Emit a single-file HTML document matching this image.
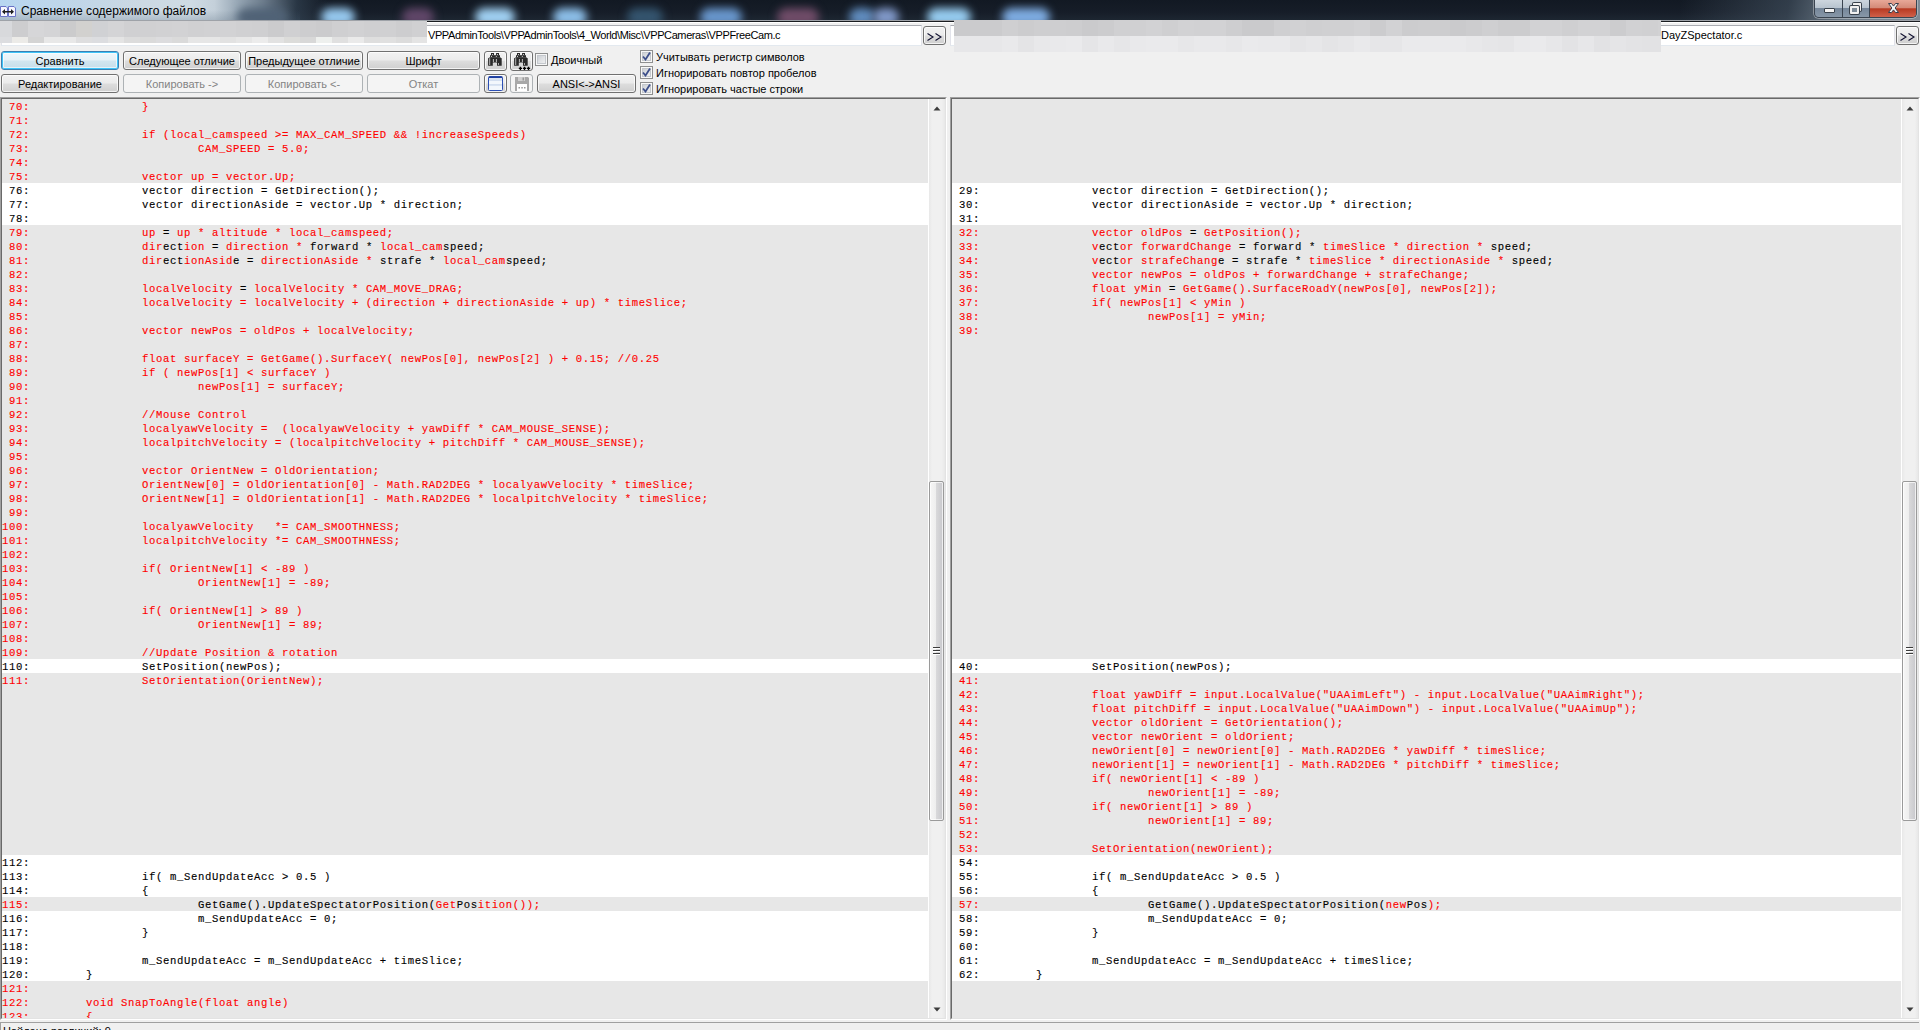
<!DOCTYPE html><html><head><meta charset="utf-8"><style>
*{margin:0;padding:0;box-sizing:border-box}
html,body{width:1920px;height:1030px;overflow:hidden;background:#f0f0f0;position:relative;font-family:"Liberation Sans",sans-serif;font-size:11px;color:#000}
.a{position:absolute}
#tb{left:0;top:0;width:1920px;height:20px;background:linear-gradient(#121923 0%,#161d28 60%,#1d2631 100%);overflow:hidden}
#tb .blob{position:absolute;border-radius:50%;filter:blur(5px)}
#tline1{left:0;top:20px;width:1920px;height:1px;background:#9ea2a8}
#tline2{left:0;top:21px;width:1920px;height:1px;background:#1a1c20}
#ttl{left:21px;top:3px;font-size:12px;line-height:16px;color:#000;white-space:pre}
.tbox{background:#fff;border:1px solid #e2e3ea;border-top-color:#abadb3;border-bottom-color:#e3e9ef;height:21px;top:25px;white-space:pre;overflow:hidden;line-height:19px;padding-left:0}
.btn{border:1px solid #707070;border-radius:3px;text-align:center;white-space:pre;overflow:hidden;
 background:linear-gradient(#f2f2f2 0%,#ebebeb 48%,#dddddd 52%,#cfcfcf 100%);box-shadow:inset 0 0 0 1px rgba(255,255,255,.75);line-height:18px;height:19px}
.btn.def{border-color:#3c7fb1;background:linear-gradient(#f0f7fb 0%,#e6f1f7 48%,#d2e6f0 52%,#c6dde9 100%);box-shadow:inset 0 0 0 1px #3fc4f8,inset 0 0 0 2px rgba(255,255,255,.6)}
.btn.dis{border-color:#adb2b5;background:#f4f4f4;color:#838383;box-shadow:none}
.cb{width:13px;height:13px;border:1px solid #8e8f8f;background:linear-gradient(135deg,#c2c6cc 0%,#dfe1e4 50%,#f6f6f6 100%);box-shadow:inset 0 0 0 1px #f8f8f8,inset 0 0 0 2px #c4c8cd}
.pane{top:97px;height:923px;border-top:1px solid #a0a0a0;border-left:1px solid #a0a0a0;border-right:1px solid #fff;border-bottom:1px solid #fff}
.pin{position:absolute;left:0;top:0;right:0;bottom:0;border-top:1px solid #696969;border-left:1px solid #696969;border-right:1px solid #e3e3e3;border-bottom:1px solid #e3e3e3;overflow:hidden;background:#e7e7e7}
.row{position:absolute;left:0;height:14px;white-space:pre;font-family:"Liberation Mono",monospace;font-size:10.6px;letter-spacing:0.64px;line-height:14px;color:#f00;padding-top:1px;-webkit-text-stroke:0.12px currentColor}
.row.w{background:#fff}
.row.g{background:#e7e7e7}
.K{color:#000}
.R{color:#f00}
.sb{position:absolute;top:0;bottom:0;width:17px;background:linear-gradient(90deg,#e8e8e8,#f0f0f0 20%,#f0f0f0 80%,#e8e8e8);border-left:1px solid #fff}
.thumb{position:absolute;left:0px;width:15px;border:1px solid #9a9a9a;border-radius:2px;background:linear-gradient(90deg,#f6f6f6 0%,#eeeeee 45%,#d8d8da 50%,#c8c8cc 100%);box-shadow:inset 0 0 0 1px rgba(255,255,255,.7)}
.mos{position:absolute}
</style></head><body><div id="tb" class="a"><div class="a" style="left:0;top:0;width:330px;height:20px;background:linear-gradient(90deg,#c3d3e0 0%,#cfdbe4 58%,#c4d0da 65%,#98a8b6 72%,#6c7c8c 80%,rgba(50,66,82,.7) 90%,rgba(19,26,36,0) 100%)"></div><div class="a" style="left:0;top:0;width:140px;height:10px;background:linear-gradient(90deg,rgba(180,215,245,.8),rgba(200,220,235,0))"></div><div class="a" style="left:0;top:10px;width:300px;height:10px;background:linear-gradient(rgba(70,90,110,0),rgba(70,90,110,.22))"></div><div class="a" style="left:237px;top:8px;width:50px;height:18px;border-radius:9px;background:rgb(80,98,118);filter:blur(4px)"></div><div class="a" style="left:321px;top:8px;width:34px;height:18px;border-radius:9px;background:rgb(150,200,238);filter:blur(4px)"></div><div class="a" style="left:402px;top:8px;width:32px;height:18px;border-radius:9px;background:rgb(96,70,104);filter:blur(4px)"></div><div class="a" style="left:475px;top:8px;width:40px;height:18px;border-radius:9px;background:rgb(160,208,242);filter:blur(4px)"></div><div class="a" style="left:553px;top:8px;width:34px;height:18px;border-radius:9px;background:rgb(140,190,232);filter:blur(4px)"></div><div class="a" style="left:627px;top:8px;width:36px;height:18px;border-radius:9px;background:rgb(52,84,110);filter:blur(4px)"></div><div class="a" style="left:700px;top:8px;width:42px;height:18px;border-radius:9px;background:rgb(104,150,204);filter:blur(4px)"></div><div class="a" style="left:777px;top:8px;width:42px;height:18px;border-radius:9px;background:rgb(112,76,104);filter:blur(4px)"></div><div class="a" style="left:849px;top:8px;width:26px;height:18px;border-radius:9px;background:rgb(96,140,190);filter:blur(4px)"></div><div class="a" style="left:873px;top:8px;width:26px;height:18px;border-radius:9px;background:rgb(128,152,200);filter:blur(4px)"></div><div class="a" style="left:927px;top:8px;width:44px;height:18px;border-radius:9px;background:rgb(150,204,240);filter:blur(4px)"></div><div class="a" style="left:1002px;top:8px;width:48px;height:18px;border-radius:9px;background:rgb(126,172,226);filter:blur(4px)"></div><div class="a" style="left:1680px;top:0;width:240px;height:20px;background:linear-gradient(100deg,rgba(19,26,36,0) 0%,rgba(70,85,100,.6) 45%,#6d7b88 70%,#7e8b96 100%)"></div></div><div id="tline1" class="a"></div><div id="tline2" class="a"></div><div class="a" style="left:0;top:22px;width:1920px;height:1px;background:#fff"></div><svg class="a" style="left:0;top:6px" width="17" height="12" viewBox="0 0 17 12"><path d="M0.5 0.5H6L7.5 2V10.5H0.5Z" fill="#f6f6ff" stroke="#6a74c6"/><path d="M8.5 0.5H14L15.5 2V10.5H8.5Z" fill="#f6f6ff" stroke="#6a74c6"/><path d="M2 5.8L5 3V5H11V3L14 5.8L11 8.6V6.6H5V8.6Z" fill="#1e1e1e"/></svg><div id="ttl" class="a">Сравнение содержимого файлов</div><div class="a" style="left:1814px;top:0;width:103px;height:18px;border:1px solid #3a4450;border-top:none;border-radius:0 0 5px 5px;overflow:hidden;box-shadow:0 0 0 1px rgba(255,255,255,.35)"><div class="a" style="left:0;top:0;width:28px;height:17px;background:linear-gradient(#cdd6de 0%,#b8c4cf 45%,#76879a 50%,#8797a8 100%);border-right:1px solid #3a4450"></div><div class="a" style="left:28px;top:0;width:27px;height:17px;background:linear-gradient(#cdd6de 0%,#b8c4cf 45%,#76879a 50%,#8797a8 100%);border-right:1px solid #3a4450"></div><div class="a" style="left:55px;top:0;width:48px;height:17px;background:linear-gradient(#e8a898 0%,#d48a78 45%,#b83a22 52%,#d0604a 100%)"></div><div class="a" style="left:9px;top:8px;width:11px;height:5px;background:#f4f4f4;border:1px solid #39424c;border-radius:1px"></div><div class="a" style="left:38px;top:3px;width:8px;height:8px;border:2px solid #f0f0f0;box-shadow:0 0 0 1px #39424c;border-radius:1px"></div><div class="a" style="left:35px;top:5.5px;width:9px;height:8px;border:2px solid #f0f0f0;box-shadow:0 0 0 1px #39424c;background:#7d8b98;border-radius:1px"></div><svg class="a" style="left:72px;top:2px" width="13" height="12" viewBox="0 0 13 12"><path d="M1.5 1.5h3l2 2.6 2-2.6h3l-3.4 4.5 3.4 4.5h-3l-2-2.6-2 2.6h-3l3.4-4.5z" fill="#f6f6f6" stroke="#3a3e4c" stroke-width="1"/></svg></div><div class="a tbox" style="left:1px;width:921px;padding-left:426px;letter-spacing:-0.4px">VPPAdminTools\VPPAdminTools\4_World\Misc\VPPCameras\VPPFreeCam.c</div><div class="a btn" style="left:923px;top:26px;width:23px;height:19px"><svg class="a" style="left:3px;top:5.5px" width="16" height="8" viewBox="0 0 16 8"><path d="M0.5 0.5L6 4L0.5 7.5M8.5 0.5L14 4L8.5 7.5" fill="none" stroke="#101030" stroke-width="1.1"/></svg></div><div class="a tbox" style="left:950px;width:945px;padding-left:710px">DayZSpectator.c</div><div class="a btn" style="left:1896px;top:26px;width:23px;height:19px"><svg class="a" style="left:3px;top:5.5px" width="16" height="8" viewBox="0 0 16 8"><path d="M0.5 0.5L6 4L0.5 7.5M8.5 0.5L14 4L8.5 7.5" fill="none" stroke="#101030" stroke-width="1.1"/></svg></div><div class="mos" style="left:0px;top:21px;width:12px;height:16px;background:#d8d9dc"></div><div class="mos" style="left:12px;top:21px;width:16px;height:16px;background:#cdcdcf"></div><div class="mos" style="left:28px;top:21px;width:16px;height:16px;background:#d6d6d8"></div><div class="mos" style="left:44px;top:21px;width:16px;height:16px;background:#d4d4d6"></div><div class="mos" style="left:60px;top:21px;width:16px;height:16px;background:#cbcbcc"></div><div class="mos" style="left:76px;top:21px;width:16px;height:16px;background:#d2d1cf"></div><div class="mos" style="left:92px;top:21px;width:16px;height:16px;background:#d0d1d4"></div><div class="mos" style="left:108px;top:21px;width:16px;height:16px;background:#d4d4d6"></div><div class="mos" style="left:124px;top:21px;width:16px;height:16px;background:#d0d0d2"></div><div class="mos" style="left:140px;top:21px;width:16px;height:16px;background:#d0d0d2"></div><div class="mos" style="left:156px;top:21px;width:16px;height:16px;background:#d1d1d3"></div><div class="mos" style="left:172px;top:21px;width:16px;height:16px;background:#d2d2d4"></div><div class="mos" style="left:188px;top:21px;width:16px;height:16px;background:#d0d0d2"></div><div class="mos" style="left:204px;top:21px;width:16px;height:16px;background:#d1d1d3"></div><div class="mos" style="left:220px;top:21px;width:16px;height:16px;background:#d2d2d4"></div><div class="mos" style="left:236px;top:21px;width:16px;height:16px;background:#d0d0d2"></div><div class="mos" style="left:252px;top:21px;width:16px;height:16px;background:#cfcfd1"></div><div class="mos" style="left:268px;top:21px;width:16px;height:16px;background:#cbcbcd"></div><div class="mos" style="left:284px;top:21px;width:16px;height:16px;background:#d0d0d2"></div><div class="mos" style="left:300px;top:21px;width:16px;height:16px;background:#cdcdcf"></div><div class="mos" style="left:316px;top:21px;width:16px;height:16px;background:#cbcbcd"></div><div class="mos" style="left:332px;top:21px;width:16px;height:16px;background:#cfcfd1"></div><div class="mos" style="left:348px;top:21px;width:16px;height:16px;background:#d1d1d3"></div><div class="mos" style="left:364px;top:21px;width:16px;height:16px;background:#cfcfd1"></div><div class="mos" style="left:380px;top:21px;width:16px;height:16px;background:#d0d0d2"></div><div class="mos" style="left:396px;top:21px;width:16px;height:16px;background:#cdcdcf"></div><div class="mos" style="left:412px;top:21px;width:15px;height:16px;background:#d0d0d2"></div><div class="mos" style="left:0px;top:37px;width:12px;height:6px;background:#dcdde0"></div><div class="mos" style="left:12px;top:37px;width:16px;height:6px;background:#ecebe8"></div><div class="mos" style="left:28px;top:37px;width:16px;height:6px;background:#d4d4d4"></div><div class="mos" style="left:44px;top:37px;width:16px;height:6px;background:#e8e8e8"></div><div class="mos" style="left:60px;top:37px;width:16px;height:6px;background:#e8e8e8"></div><div class="mos" style="left:76px;top:37px;width:16px;height:6px;background:#dededf"></div><div class="mos" style="left:92px;top:37px;width:16px;height:6px;background:#dcdde0"></div><div class="mos" style="left:108px;top:37px;width:16px;height:6px;background:#e4e4e4"></div><div class="mos" style="left:124px;top:37px;width:16px;height:6px;background:#dcdcdc"></div><div class="mos" style="left:140px;top:37px;width:16px;height:6px;background:#dadada"></div><div class="mos" style="left:156px;top:37px;width:16px;height:6px;background:#dcdcde"></div><div class="mos" style="left:172px;top:37px;width:16px;height:6px;background:#dadada"></div><div class="mos" style="left:188px;top:37px;width:16px;height:6px;background:#e6e6e6"></div><div class="mos" style="left:204px;top:37px;width:16px;height:6px;background:#e6e6e6"></div><div class="mos" style="left:220px;top:37px;width:16px;height:6px;background:#e2e2e2"></div><div class="mos" style="left:236px;top:37px;width:16px;height:6px;background:#e6e6e6"></div><div class="mos" style="left:252px;top:37px;width:16px;height:6px;background:#ececec"></div><div class="mos" style="left:268px;top:37px;width:16px;height:6px;background:#e2e2e2"></div><div class="mos" style="left:284px;top:37px;width:16px;height:6px;background:#dcdcda"></div><div class="mos" style="left:300px;top:37px;width:16px;height:6px;background:#d8d8d8"></div><div class="mos" style="left:316px;top:37px;width:16px;height:6px;background:#eef0ee"></div><div class="mos" style="left:332px;top:37px;width:16px;height:6px;background:#e0e0e0"></div><div class="mos" style="left:348px;top:37px;width:16px;height:6px;background:#eaeaea"></div><div class="mos" style="left:364px;top:37px;width:16px;height:6px;background:#dedede"></div><div class="mos" style="left:380px;top:37px;width:16px;height:6px;background:#e0e0e0"></div><div class="mos" style="left:396px;top:37px;width:16px;height:6px;background:#dcdcdc"></div><div class="mos" style="left:412px;top:37px;width:15px;height:6px;background:#e4e4e4"></div><div class="mos" style="left:954px;top:20px;width:16px;height:16px;background:rgb(202,202,204)"></div><div class="mos" style="left:970px;top:20px;width:16px;height:16px;background:rgb(203,203,205)"></div><div class="mos" style="left:986px;top:20px;width:16px;height:16px;background:rgb(203,203,205)"></div><div class="mos" style="left:1002px;top:20px;width:16px;height:16px;background:rgb(207,207,209)"></div><div class="mos" style="left:1018px;top:20px;width:16px;height:16px;background:rgb(204,204,206)"></div><div class="mos" style="left:1034px;top:20px;width:16px;height:16px;background:rgb(206,206,208)"></div><div class="mos" style="left:1050px;top:20px;width:16px;height:16px;background:rgb(206,206,208)"></div><div class="mos" style="left:1066px;top:20px;width:16px;height:16px;background:rgb(205,205,207)"></div><div class="mos" style="left:1082px;top:20px;width:16px;height:16px;background:rgb(202,202,204)"></div><div class="mos" style="left:1098px;top:20px;width:16px;height:16px;background:rgb(204,204,206)"></div><div class="mos" style="left:1114px;top:20px;width:16px;height:16px;background:rgb(208,208,210)"></div><div class="mos" style="left:1130px;top:20px;width:16px;height:16px;background:rgb(208,208,210)"></div><div class="mos" style="left:1146px;top:20px;width:16px;height:16px;background:rgb(210,210,212)"></div><div class="mos" style="left:1162px;top:20px;width:16px;height:16px;background:rgb(207,207,209)"></div><div class="mos" style="left:1178px;top:20px;width:16px;height:16px;background:rgb(210,210,212)"></div><div class="mos" style="left:1194px;top:20px;width:16px;height:16px;background:rgb(209,209,211)"></div><div class="mos" style="left:1210px;top:20px;width:16px;height:16px;background:rgb(210,210,212)"></div><div class="mos" style="left:1226px;top:20px;width:16px;height:16px;background:rgb(206,206,208)"></div><div class="mos" style="left:1242px;top:20px;width:16px;height:16px;background:rgb(202,202,204)"></div><div class="mos" style="left:1258px;top:20px;width:16px;height:16px;background:rgb(202,202,204)"></div><div class="mos" style="left:1274px;top:20px;width:16px;height:16px;background:rgb(207,207,209)"></div><div class="mos" style="left:1290px;top:20px;width:16px;height:16px;background:rgb(209,209,211)"></div><div class="mos" style="left:1306px;top:20px;width:16px;height:16px;background:rgb(207,207,209)"></div><div class="mos" style="left:1322px;top:20px;width:16px;height:16px;background:rgb(208,208,210)"></div><div class="mos" style="left:1338px;top:20px;width:16px;height:16px;background:rgb(208,208,210)"></div><div class="mos" style="left:1354px;top:20px;width:16px;height:16px;background:rgb(210,210,212)"></div><div class="mos" style="left:1370px;top:20px;width:16px;height:16px;background:rgb(204,204,206)"></div><div class="mos" style="left:1386px;top:20px;width:16px;height:16px;background:rgb(210,210,212)"></div><div class="mos" style="left:1402px;top:20px;width:16px;height:16px;background:rgb(204,204,206)"></div><div class="mos" style="left:1418px;top:20px;width:16px;height:16px;background:rgb(205,205,207)"></div><div class="mos" style="left:1434px;top:20px;width:16px;height:16px;background:rgb(205,205,207)"></div><div class="mos" style="left:1450px;top:20px;width:16px;height:16px;background:rgb(202,202,204)"></div><div class="mos" style="left:1466px;top:20px;width:16px;height:16px;background:rgb(204,204,206)"></div><div class="mos" style="left:1482px;top:20px;width:16px;height:16px;background:rgb(207,207,209)"></div><div class="mos" style="left:1498px;top:20px;width:16px;height:16px;background:rgb(204,204,206)"></div><div class="mos" style="left:1514px;top:20px;width:16px;height:16px;background:rgb(204,204,206)"></div><div class="mos" style="left:1530px;top:20px;width:16px;height:16px;background:rgb(210,210,212)"></div><div class="mos" style="left:1546px;top:20px;width:16px;height:16px;background:rgb(210,210,212)"></div><div class="mos" style="left:1562px;top:20px;width:16px;height:16px;background:rgb(207,207,209)"></div><div class="mos" style="left:1578px;top:20px;width:16px;height:16px;background:rgb(210,210,212)"></div><div class="mos" style="left:1594px;top:20px;width:16px;height:16px;background:rgb(210,210,212)"></div><div class="mos" style="left:1610px;top:20px;width:16px;height:16px;background:rgb(204,204,206)"></div><div class="mos" style="left:1626px;top:20px;width:16px;height:16px;background:rgb(209,209,211)"></div><div class="mos" style="left:1642px;top:20px;width:16px;height:16px;background:rgb(208,208,210)"></div><div class="mos" style="left:1658px;top:20px;width:3px;height:16px;background:rgb(210,210,212)"></div><div class="mos" style="left:954px;top:36px;width:16px;height:16px;background:rgb(231,231,233)"></div><div class="mos" style="left:970px;top:36px;width:16px;height:16px;background:rgb(231,231,233)"></div><div class="mos" style="left:986px;top:36px;width:16px;height:16px;background:rgb(231,231,233)"></div><div class="mos" style="left:1002px;top:36px;width:16px;height:16px;background:rgb(233,233,235)"></div><div class="mos" style="left:1018px;top:36px;width:16px;height:16px;background:rgb(228,228,230)"></div><div class="mos" style="left:1034px;top:36px;width:16px;height:16px;background:rgb(232,232,234)"></div><div class="mos" style="left:1050px;top:36px;width:16px;height:16px;background:rgb(233,233,235)"></div><div class="mos" style="left:1066px;top:36px;width:16px;height:16px;background:rgb(234,234,236)"></div><div class="mos" style="left:1082px;top:36px;width:16px;height:16px;background:rgb(229,229,231)"></div><div class="mos" style="left:1098px;top:36px;width:16px;height:16px;background:rgb(233,233,235)"></div><div class="mos" style="left:1114px;top:36px;width:16px;height:16px;background:rgb(230,230,232)"></div><div class="mos" style="left:1130px;top:36px;width:16px;height:16px;background:rgb(233,233,235)"></div><div class="mos" style="left:1146px;top:36px;width:16px;height:16px;background:rgb(234,234,236)"></div><div class="mos" style="left:1162px;top:36px;width:16px;height:16px;background:rgb(234,234,236)"></div><div class="mos" style="left:1178px;top:36px;width:16px;height:16px;background:rgb(231,231,233)"></div><div class="mos" style="left:1194px;top:36px;width:16px;height:16px;background:rgb(233,233,235)"></div><div class="mos" style="left:1210px;top:36px;width:16px;height:16px;background:rgb(233,233,235)"></div><div class="mos" style="left:1226px;top:36px;width:16px;height:16px;background:rgb(231,231,233)"></div><div class="mos" style="left:1242px;top:36px;width:16px;height:16px;background:rgb(234,234,236)"></div><div class="mos" style="left:1258px;top:36px;width:16px;height:16px;background:rgb(233,233,235)"></div><div class="mos" style="left:1274px;top:36px;width:16px;height:16px;background:rgb(233,233,235)"></div><div class="mos" style="left:1290px;top:36px;width:16px;height:16px;background:rgb(229,229,231)"></div><div class="mos" style="left:1306px;top:36px;width:16px;height:16px;background:rgb(231,231,233)"></div><div class="mos" style="left:1322px;top:36px;width:16px;height:16px;background:rgb(228,228,230)"></div><div class="mos" style="left:1338px;top:36px;width:16px;height:16px;background:rgb(230,230,232)"></div><div class="mos" style="left:1354px;top:36px;width:16px;height:16px;background:rgb(233,233,235)"></div><div class="mos" style="left:1370px;top:36px;width:16px;height:16px;background:rgb(230,230,232)"></div><div class="mos" style="left:1386px;top:36px;width:16px;height:16px;background:rgb(230,230,232)"></div><div class="mos" style="left:1402px;top:36px;width:16px;height:16px;background:rgb(234,234,236)"></div><div class="mos" style="left:1418px;top:36px;width:16px;height:16px;background:rgb(234,234,236)"></div><div class="mos" style="left:1434px;top:36px;width:16px;height:16px;background:rgb(234,234,236)"></div><div class="mos" style="left:1450px;top:36px;width:16px;height:16px;background:rgb(234,234,236)"></div><div class="mos" style="left:1466px;top:36px;width:16px;height:16px;background:rgb(232,232,234)"></div><div class="mos" style="left:1482px;top:36px;width:16px;height:16px;background:rgb(230,230,232)"></div><div class="mos" style="left:1498px;top:36px;width:16px;height:16px;background:rgb(229,229,231)"></div><div class="mos" style="left:1514px;top:36px;width:16px;height:16px;background:rgb(233,233,235)"></div><div class="mos" style="left:1530px;top:36px;width:16px;height:16px;background:rgb(234,234,236)"></div><div class="mos" style="left:1546px;top:36px;width:16px;height:16px;background:rgb(231,231,233)"></div><div class="mos" style="left:1562px;top:36px;width:16px;height:16px;background:rgb(227,227,229)"></div><div class="mos" style="left:1578px;top:36px;width:16px;height:16px;background:rgb(231,231,233)"></div><div class="mos" style="left:1594px;top:36px;width:16px;height:16px;background:rgb(226,226,228)"></div><div class="mos" style="left:1610px;top:36px;width:16px;height:16px;background:rgb(229,229,231)"></div><div class="mos" style="left:1626px;top:36px;width:16px;height:16px;background:rgb(227,227,229)"></div><div class="mos" style="left:1642px;top:36px;width:16px;height:16px;background:rgb(226,226,228)"></div><div class="mos" style="left:1658px;top:36px;width:3px;height:16px;background:rgb(226,226,228)"></div><div class="a btn def" style="left:1px;top:51px;width:118px">Сравнить</div><div class="a btn " style="left:123px;top:51px;width:118px">Следующее отличие</div><div class="a btn " style="left:245px;top:51px;width:118px">Предыдущее отличие</div><div class="a btn " style="left:367px;top:51px;width:113px">Шрифт</div><div class="a btn " style="left:1px;top:74px;width:118px">Редактирование</div><div class="a btn dis" style="left:123px;top:74px;width:118px">Копировать -&gt;</div><div class="a btn dis" style="left:245px;top:74px;width:118px">Копировать &lt;-</div><div class="a btn dis" style="left:367px;top:74px;width:113px">Откат</div><div class="a btn" style="left:484px;top:51px;width:23px;height:20px"><svg class="a" style="left:0;top:-1px" width="20" height="18" viewBox="0 0 20 18"><rect x="6" y="2" width="3" height="2.3" fill="#2a2a2a"/><rect x="11.1" y="2" width="2.9" height="2.3" fill="#2a2a2a"/><rect x="5" y="4.2" width="10" height="2.2" fill="#2a2a2a"/><path d="M3.1 7.2L5 6.2H15L16.7 7.2V14.8H12V11.5H7.8V14.8H3.1Z" fill="#2a2a2a"/><rect x="4.2" y="7.2" width="1" height="6.8" fill="#b8b8b8"/><rect x="7.9" y="8" width="0.9" height="3" fill="#d0d0d0"/><rect x="10.9" y="8" width="0.9" height="3" fill="#d0d0d0"/><rect x="13" y="12" width="1" height="2" fill="#a8a8a8"/><rect x="7" y="3" width="1" height="1" fill="#c8c8c8"/><rect x="12" y="3" width="1" height="1" fill="#c8c8c8"/><rect x="6" y="5" width="1" height="1" fill="#c8c8c8"/><rect x="10.8" y="5" width="1" height="1" fill="#c8c8c8"/></svg></div><div class="a btn" style="left:510px;top:51px;width:23px;height:20px"><svg class="a" style="left:0;top:-1px" width="20" height="18" viewBox="0 0 20 18"><rect x="6" y="2" width="3" height="2.3" fill="#2a2a2a"/><rect x="11.1" y="2" width="2.9" height="2.3" fill="#2a2a2a"/><rect x="5" y="4.2" width="10" height="2.2" fill="#2a2a2a"/><path d="M3.1 7.2L5 6.2H15L16.7 7.2V14.8H12V11.5H7.8V14.8H3.1Z" fill="#2a2a2a"/><rect x="4.2" y="7.2" width="1" height="6.8" fill="#b8b8b8"/><rect x="7.9" y="8" width="0.9" height="3" fill="#d0d0d0"/><rect x="10.9" y="8" width="0.9" height="3" fill="#d0d0d0"/><rect x="13" y="12" width="1" height="2" fill="#a8a8a8"/><rect x="7" y="3" width="1" height="1" fill="#c8c8c8"/><rect x="12" y="3" width="1" height="1" fill="#c8c8c8"/><rect x="6" y="5" width="1" height="1" fill="#c8c8c8"/><rect x="10.8" y="5" width="1" height="1" fill="#c8c8c8"/></svg><svg class="a" style="left:0;top:-1px" width="22" height="20" viewBox="0 0 22 20"><path d="M8.7 15.8h1.4v0.9h0.9v1.4h-0.9v0.9h-1.4v-0.9h-0.9v-1.4h0.9zM12.8 15.8h1.4v0.9h0.9v1.4h-0.9v0.9h-1.4v-0.9h-0.9v-1.4h0.9zM16.8 15.8h1.4v0.9h0.9v1.4h-0.9v0.9h-1.4v-0.9h-0.9v-1.4h0.9z" fill="#000"/></svg></div><div class="a btn" style="left:484px;top:74px;width:23px;height:19px"><svg class="a" style="left:3px;top:1px" width="16" height="16" viewBox="0 0 16 16"><rect x="0.5" y="0.5" width="14" height="14" rx="1" fill="#f2f7fc" stroke="#2c4fb4" stroke-width="1"/><rect x="1" y="0.5" width="13" height="1.6" fill="#1f3f9c"/><rect x="1" y="3.6" width="13" height="0.9" fill="#b4c8e4"/><rect x="1" y="8.5" width="13" height="0.9" fill="#b4c8e4"/></svg></div><div class="a btn dis" style="left:510px;top:74px;width:23px;height:19px"><svg class="a" style="left:3px;top:1px" width="16" height="16" viewBox="0 0 16 16"><path d="M2 1h12l1 1v13H1V1z" fill="#a8a8a8"/><rect x="4" y="1" width="7" height="4" fill="#d0d0d0"/><rect x="8.5" y="1.5" width="1.5" height="3" fill="#999"/><rect x="3" y="8" width="10" height="7" fill="#fff"/><rect x="4.5" y="11" width="1.5" height="1.5" fill="#999"/><rect x="7.3" y="11" width="1.5" height="1.5" fill="#999"/><rect x="10" y="11" width="1.5" height="1.5" fill="#999"/></svg></div><div class="a btn " style="left:537px;top:74px;width:99px">ANSI&lt;-&gt;ANSI</div><div class="a cb" style="left:535px;top:53px"></div><div class="a" style="left:551px;top:54px;line-height:13px;white-space:pre">Двоичный</div><div class="a cb" style="left:640px;top:50px"><svg class="a" style="left:1px;top:1px" width="9" height="9" viewBox="0 0 9 9"><path d="M1 4.5 L3.5 7.5 L8 0.5" fill="none" stroke="#3d4f8a" stroke-width="1.8"/></svg></div><div class="a" style="left:656px;top:51px;line-height:13px;white-space:pre">Учитывать регистр символов</div><div class="a cb" style="left:640px;top:66px"><svg class="a" style="left:1px;top:1px" width="9" height="9" viewBox="0 0 9 9"><path d="M1 4.5 L3.5 7.5 L8 0.5" fill="none" stroke="#3d4f8a" stroke-width="1.8"/></svg></div><div class="a" style="left:656px;top:67px;line-height:13px;white-space:pre">Игнорировать повтор пробелов</div><div class="a cb" style="left:640px;top:82px"><svg class="a" style="left:1px;top:1px" width="9" height="9" viewBox="0 0 9 9"><path d="M1 4.5 L3.5 7.5 L8 0.5" fill="none" stroke="#3d4f8a" stroke-width="1.8"/></svg></div><div class="a" style="left:656px;top:83px;line-height:13px;white-space:pre">Игнорировать частые строки</div><div class="a pane" style="left:0px;width:947px"><div class="pin"><div class="row g" style="top:0px;width:100%"><span> 70:</span><span class="R">                }</span></div><div class="row g" style="top:14px;width:100%"><span> 71:</span></div><div class="row g" style="top:28px;width:100%"><span> 72:</span><span class="R">                if (local_camspeed &gt;= MAX_CAM_SPEED &amp;&amp; !increaseSpeeds)</span></div><div class="row g" style="top:42px;width:100%"><span> 73:</span><span class="R">                        CAM_SPEED = 5.0;</span></div><div class="row g" style="top:56px;width:100%"><span> 74:</span></div><div class="row g" style="top:70px;width:100%"><span> 75:</span><span class="R">                vector up = vector.Up;</span></div><div class="row w K" style="top:84px;width:100%"><span> 76:</span><span class="K">                vector direction = GetDirection();</span></div><div class="row w K" style="top:98px;width:100%"><span> 77:</span><span class="K">                vector directionAside = vector.Up * direction;</span></div><div class="row w K" style="top:112px;width:100%"><span> 78:</span></div><div class="row g" style="top:126px;width:100%"><span> 79:</span><span class="R">                up </span><span class="K">=</span><span class="R"> up * altitude * local_camspeed;</span></div><div class="row g" style="top:140px;width:100%"><span> 80:</span><span class="R">                dir</span><span class="K">ect</span><span class="R">ion</span><span class="K"> = </span><span class="R">direction * </span><span class="K">forward * </span><span class="R">local_cam</span><span class="K">speed;</span></div><div class="row g" style="top:154px;width:100%"><span> 81:</span><span class="R">                dir</span><span class="K">ect</span><span class="R">ionAsid</span><span class="K">e = </span><span class="R">directionAside * </span><span class="K">strafe * </span><span class="R">local_cam</span><span class="K">speed;</span></div><div class="row g" style="top:168px;width:100%"><span> 82:</span></div><div class="row g" style="top:182px;width:100%"><span> 83:</span><span class="R">                localVelocity </span><span class="K">=</span><span class="R"> localVelocity * CAM_MOVE_DRAG;</span></div><div class="row g" style="top:196px;width:100%"><span> 84:</span><span class="R">                localVelocity = localVelocity + (direction + directionAside + up) * timeSlice;</span></div><div class="row g" style="top:210px;width:100%"><span> 85:</span></div><div class="row g" style="top:224px;width:100%"><span> 86:</span><span class="R">                vector newPos = oldPos + localVelocity;</span></div><div class="row g" style="top:238px;width:100%"><span> 87:</span></div><div class="row g" style="top:252px;width:100%"><span> 88:</span><span class="R">                float surfaceY = GetGame().SurfaceY( newPos[0], newPos[2] ) + 0.15; //0.25</span></div><div class="row g" style="top:266px;width:100%"><span> 89:</span><span class="R">                if ( newPos[1] &lt; surfaceY )</span></div><div class="row g" style="top:280px;width:100%"><span> 90:</span><span class="R">                        newPos[1] = surfaceY;</span></div><div class="row g" style="top:294px;width:100%"><span> 91:</span></div><div class="row g" style="top:308px;width:100%"><span> 92:</span><span class="R">                //Mouse Control</span></div><div class="row g" style="top:322px;width:100%"><span> 93:</span><span class="R">                localyawVelocity =  (localyawVelocity + yawDiff * CAM_MOUSE_SENSE);</span></div><div class="row g" style="top:336px;width:100%"><span> 94:</span><span class="R">                localpitchVelocity = (localpitchVelocity + pitchDiff * CAM_MOUSE_SENSE);</span></div><div class="row g" style="top:350px;width:100%"><span> 95:</span></div><div class="row g" style="top:364px;width:100%"><span> 96:</span><span class="R">                vector OrientNew = OldOrientation;</span></div><div class="row g" style="top:378px;width:100%"><span> 97:</span><span class="R">                OrientNew[0] = OldOrientation[0] - Math.RAD2DEG * localyawVelocity * timeSlice;</span></div><div class="row g" style="top:392px;width:100%"><span> 98:</span><span class="R">                OrientNew[1] = OldOrientation[1] - Math.RAD2DEG * localpitchVelocity * timeSlice;</span></div><div class="row g" style="top:406px;width:100%"><span> 99:</span></div><div class="row g" style="top:420px;width:100%"><span>100:</span><span class="R">                localyawVelocity   *= CAM_SMOOTHNESS;</span></div><div class="row g" style="top:434px;width:100%"><span>101:</span><span class="R">                localpitchVelocity *= CAM_SMOOTHNESS;</span></div><div class="row g" style="top:448px;width:100%"><span>102:</span></div><div class="row g" style="top:462px;width:100%"><span>103:</span><span class="R">                if( OrientNew[1] &lt; -89 )</span></div><div class="row g" style="top:476px;width:100%"><span>104:</span><span class="R">                        OrientNew[1] = -89;</span></div><div class="row g" style="top:490px;width:100%"><span>105:</span></div><div class="row g" style="top:504px;width:100%"><span>106:</span><span class="R">                if( OrientNew[1] &gt; 89 )</span></div><div class="row g" style="top:518px;width:100%"><span>107:</span><span class="R">                        OrientNew[1] = 89;</span></div><div class="row g" style="top:532px;width:100%"><span>108:</span></div><div class="row g" style="top:546px;width:100%"><span>109:</span><span class="R">                //Update Position &amp; rotation</span></div><div class="row w K" style="top:560px;width:100%"><span>110:</span><span class="K">                SetPosition(newPos);</span></div><div class="row g" style="top:574px;width:100%"><span>111:</span><span class="R">                SetOrientation(OrientNew);</span></div><div class="row g" style="top:588px;width:100%"></div><div class="row g" style="top:602px;width:100%"></div><div class="row g" style="top:616px;width:100%"></div><div class="row g" style="top:630px;width:100%"></div><div class="row g" style="top:644px;width:100%"></div><div class="row g" style="top:658px;width:100%"></div><div class="row g" style="top:672px;width:100%"></div><div class="row g" style="top:686px;width:100%"></div><div class="row g" style="top:700px;width:100%"></div><div class="row g" style="top:714px;width:100%"></div><div class="row g" style="top:728px;width:100%"></div><div class="row g" style="top:742px;width:100%"></div><div class="row w K" style="top:756px;width:100%"><span>112:</span></div><div class="row w K" style="top:770px;width:100%"><span>113:</span><span class="K">                if( m_SendUpdateAcc &gt; 0.5 )</span></div><div class="row w K" style="top:784px;width:100%"><span>114:</span><span class="K">                {</span></div><div class="row g" style="top:798px;width:100%"><span>115:</span><span class="R">                        </span><span class="K">GetGame().UpdateSpectatorPosition(</span><span class="R">Get</span><span class="K">Pos</span><span class="R">ition());</span></div><div class="row w K" style="top:812px;width:100%"><span>116:</span><span class="K">                        m_SendUpdateAcc = 0;</span></div><div class="row w K" style="top:826px;width:100%"><span>117:</span><span class="K">                }</span></div><div class="row w K" style="top:840px;width:100%"><span>118:</span></div><div class="row w K" style="top:854px;width:100%"><span>119:</span><span class="K">                m_SendUpdateAcc = m_SendUpdateAcc + timeSlice;</span></div><div class="row w K" style="top:868px;width:100%"><span>120:</span><span class="K">        }</span></div><div class="row g" style="top:882px;width:100%"><span>121:</span></div><div class="row g" style="top:896px;width:100%"><span>122:</span><span class="R">        void SnapToAngle(float angle)</span></div><div class="row g" style="top:910px;width:100%"><span>123:</span><span class="R">        {</span></div><div class="sb" style="right:0"><svg class="a" style="left:4px;top:7px" width="8" height="5" viewBox="0 0 8 5"><path d="M0.5 4.5 L4 0.5 L7.5 4.5z" fill="#3c3c3c"/></svg><div class="thumb" style="top:382px;height:340px"><div class="a" style="left:3px;top:165px;width:7px;height:1px;background:#3c3c3c;box-shadow:0 3px 0 #3c3c3c,0 6px 0 #3c3c3c,0 1px 0 #fff,0 4px 0 #fff,0 7px 0 #fff"></div></div><svg class="a" style="left:4px;bottom:6px" width="8" height="5" viewBox="0 0 8 5"><path d="M0.5 0.5 L4 4.5 L7.5 0.5z" fill="#3c3c3c"/></svg></div></div></div><div class="a pane" style="left:950px;width:970px"><div class="pin"><div class="row g" style="top:0px;width:100%"></div><div class="row g" style="top:14px;width:100%"></div><div class="row g" style="top:28px;width:100%"></div><div class="row g" style="top:42px;width:100%"></div><div class="row g" style="top:56px;width:100%"></div><div class="row g" style="top:70px;width:100%"></div><div class="row w K" style="top:84px;width:100%"><span> 29:</span><span class="K">                vector direction = GetDirection();</span></div><div class="row w K" style="top:98px;width:100%"><span> 30:</span><span class="K">                vector directionAside = vector.Up * direction;</span></div><div class="row w K" style="top:112px;width:100%"><span> 31:</span></div><div class="row g" style="top:126px;width:100%"><span> 32:</span><span class="R">                vector oldPos </span><span class="K">=</span><span class="R"> GetPosition();</span></div><div class="row g" style="top:140px;width:100%"><span> 33:</span><span class="R">                v</span><span class="K">ect</span><span class="R">or forwardChange </span><span class="K">= forward * </span><span class="R">timeSlice * direction * </span><span class="K">speed;</span></div><div class="row g" style="top:154px;width:100%"><span> 34:</span><span class="R">                v</span><span class="K">ect</span><span class="R">or strafeChang</span><span class="K">e = strafe * </span><span class="R">timeSlice * directionAside * </span><span class="K">speed;</span></div><div class="row g" style="top:168px;width:100%"><span> 35:</span><span class="R">                vector newPos = oldPos + forwardChange + strafeChange;</span></div><div class="row g" style="top:182px;width:100%"><span> 36:</span><span class="R">                float yMin </span><span class="K">=</span><span class="R"> GetGame().SurfaceRoadY(newPos[0], newPos[2]);</span></div><div class="row g" style="top:196px;width:100%"><span> 37:</span><span class="R">                if( newPos[1] &lt; yMin )</span></div><div class="row g" style="top:210px;width:100%"><span> 38:</span><span class="R">                        newPos[1] = yMin;</span></div><div class="row g" style="top:224px;width:100%"><span> 39:</span></div><div class="row g" style="top:238px;width:100%"></div><div class="row g" style="top:252px;width:100%"></div><div class="row g" style="top:266px;width:100%"></div><div class="row g" style="top:280px;width:100%"></div><div class="row g" style="top:294px;width:100%"></div><div class="row g" style="top:308px;width:100%"></div><div class="row g" style="top:322px;width:100%"></div><div class="row g" style="top:336px;width:100%"></div><div class="row g" style="top:350px;width:100%"></div><div class="row g" style="top:364px;width:100%"></div><div class="row g" style="top:378px;width:100%"></div><div class="row g" style="top:392px;width:100%"></div><div class="row g" style="top:406px;width:100%"></div><div class="row g" style="top:420px;width:100%"></div><div class="row g" style="top:434px;width:100%"></div><div class="row g" style="top:448px;width:100%"></div><div class="row g" style="top:462px;width:100%"></div><div class="row g" style="top:476px;width:100%"></div><div class="row g" style="top:490px;width:100%"></div><div class="row g" style="top:504px;width:100%"></div><div class="row g" style="top:518px;width:100%"></div><div class="row g" style="top:532px;width:100%"></div><div class="row g" style="top:546px;width:100%"></div><div class="row w K" style="top:560px;width:100%"><span> 40:</span><span class="K">                SetPosition(newPos);</span></div><div class="row g" style="top:574px;width:100%"><span> 41:</span></div><div class="row g" style="top:588px;width:100%"><span> 42:</span><span class="R">                float yawDiff = input.LocalValue("UAAimLeft") - input.LocalValue("UAAimRight");</span></div><div class="row g" style="top:602px;width:100%"><span> 43:</span><span class="R">                float pitchDiff = input.LocalValue("UAAimDown") - input.LocalValue("UAAimUp");</span></div><div class="row g" style="top:616px;width:100%"><span> 44:</span><span class="R">                vector oldOrient = GetOrientation();</span></div><div class="row g" style="top:630px;width:100%"><span> 45:</span><span class="R">                vector newOrient = oldOrient;</span></div><div class="row g" style="top:644px;width:100%"><span> 46:</span><span class="R">                newOrient[0] = newOrient[0] - Math.RAD2DEG * yawDiff * timeSlice;</span></div><div class="row g" style="top:658px;width:100%"><span> 47:</span><span class="R">                newOrient[1] = newOrient[1] - Math.RAD2DEG * pitchDiff * timeSlice;</span></div><div class="row g" style="top:672px;width:100%"><span> 48:</span><span class="R">                if( newOrient[1] &lt; -89 )</span></div><div class="row g" style="top:686px;width:100%"><span> 49:</span><span class="R">                        newOrient[1] = -89;</span></div><div class="row g" style="top:700px;width:100%"><span> 50:</span><span class="R">                if( newOrient[1] &gt; 89 )</span></div><div class="row g" style="top:714px;width:100%"><span> 51:</span><span class="R">                        newOrient[1] = 89;</span></div><div class="row g" style="top:728px;width:100%"><span> 52:</span></div><div class="row g" style="top:742px;width:100%"><span> 53:</span><span class="R">                SetOrientation(newOrient);</span></div><div class="row w K" style="top:756px;width:100%"><span> 54:</span></div><div class="row w K" style="top:770px;width:100%"><span> 55:</span><span class="K">                if( m_SendUpdateAcc &gt; 0.5 )</span></div><div class="row w K" style="top:784px;width:100%"><span> 56:</span><span class="K">                {</span></div><div class="row g" style="top:798px;width:100%"><span> 57:</span><span class="R">                        </span><span class="K">GetGame().UpdateSpectatorPosition(</span><span class="R">new</span><span class="K">Pos</span><span class="R">);</span></div><div class="row w K" style="top:812px;width:100%"><span> 58:</span><span class="K">                        m_SendUpdateAcc = 0;</span></div><div class="row w K" style="top:826px;width:100%"><span> 59:</span><span class="K">                }</span></div><div class="row w K" style="top:840px;width:100%"><span> 60:</span></div><div class="row w K" style="top:854px;width:100%"><span> 61:</span><span class="K">                m_SendUpdateAcc = m_SendUpdateAcc + timeSlice;</span></div><div class="row w K" style="top:868px;width:100%"><span> 62:</span><span class="K">        }</span></div><div class="row g" style="top:882px;width:100%"></div><div class="row g" style="top:896px;width:100%"></div><div class="row g" style="top:910px;width:100%"></div><div class="sb" style="right:0"><svg class="a" style="left:4px;top:7px" width="8" height="5" viewBox="0 0 8 5"><path d="M0.5 4.5 L4 0.5 L7.5 4.5z" fill="#3c3c3c"/></svg><div class="thumb" style="top:382px;height:340px"><div class="a" style="left:3px;top:165px;width:7px;height:1px;background:#3c3c3c;box-shadow:0 3px 0 #3c3c3c,0 6px 0 #3c3c3c,0 1px 0 #fff,0 4px 0 #fff,0 7px 0 #fff"></div></div><svg class="a" style="left:4px;bottom:6px" width="8" height="5" viewBox="0 0 8 5"><path d="M0.5 0.5 L4 4.5 L7.5 0.5z" fill="#3c3c3c"/></svg></div></div></div><div class="a" style="left:0;top:1022px;width:1919px;height:8px;border-top:1px solid #a0a0a0;border-left:1px solid #a0a0a0;overflow:hidden"><div class="a" style="left:2px;top:2px;white-space:pre;line-height:13px">Найдено различий: 9</div></div></body></html>
